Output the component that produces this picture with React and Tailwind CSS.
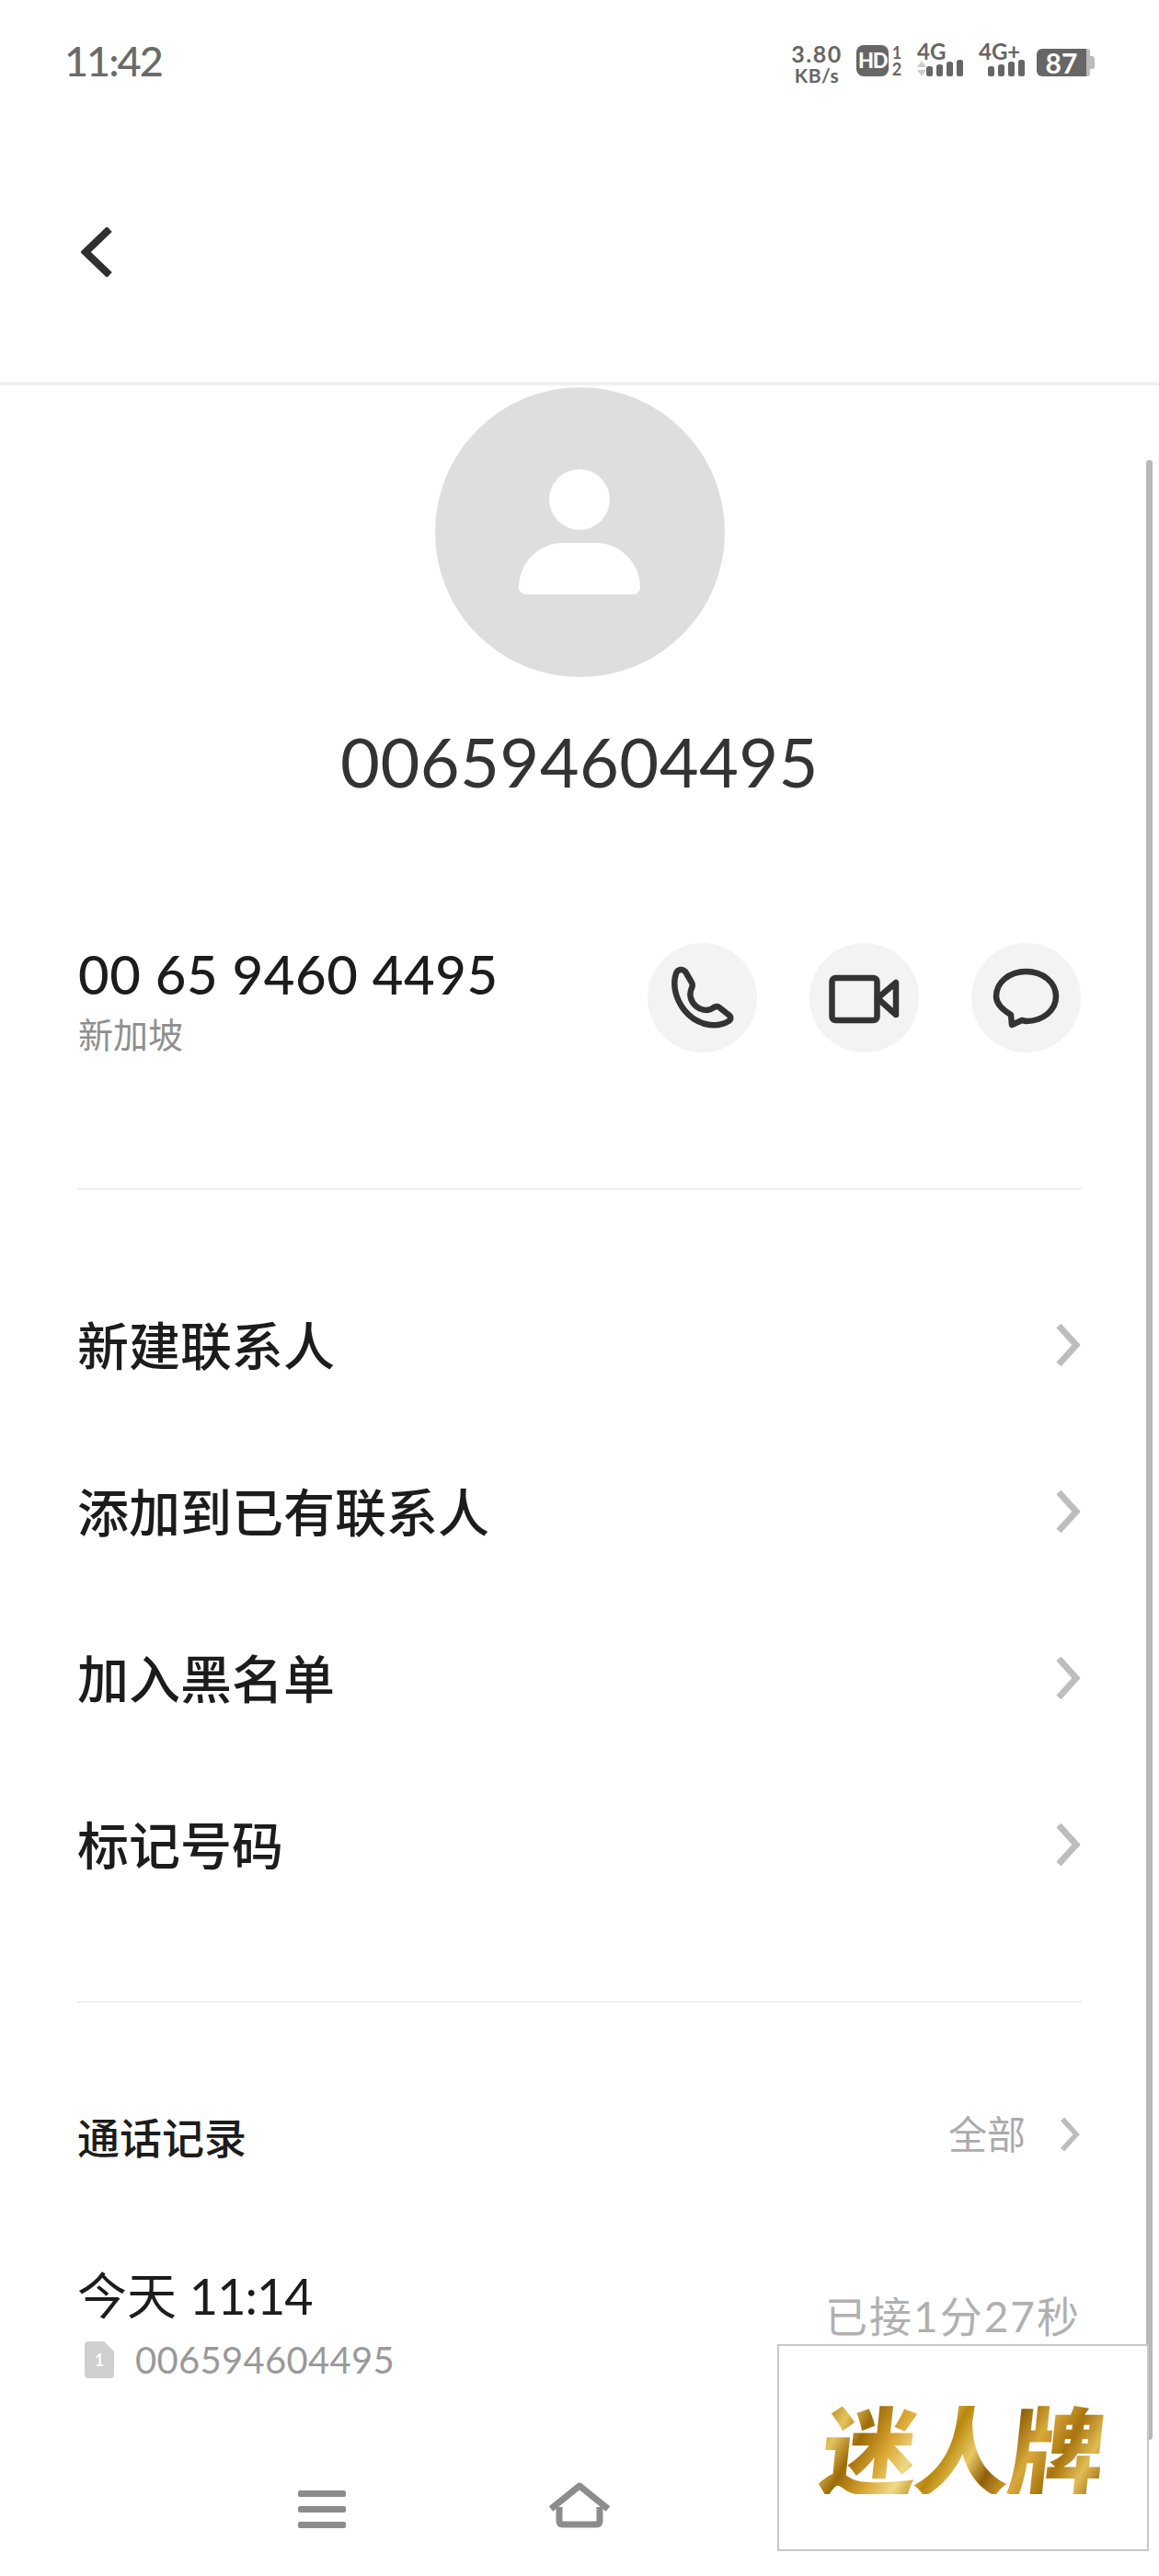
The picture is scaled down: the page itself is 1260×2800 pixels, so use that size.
const cjk = { fontFamily: 'Lato, "Noto Sans CJK SC", sans-serif' }

const actions = ['新建联系人', '添加到已有联系人', '加入黑名单', '标记号码']

function Chevron({ className }) {
  return (
    <svg viewBox="0 0 28 48" className={className} fill="none" stroke="currentColor" strokeWidth="7">
      <path d="M4 3l19 21L4 45" />
    </svg>
  )
}

function Bars() {
  return (
    <svg width="40" height="18" viewBox="0 0 40 18" fill="#666" className="block">
      <rect x="0" y="7" width="7" height="11" rx="2.5" />
      <rect x="11" y="5" width="7" height="13" rx="2.5" />
      <rect x="22" y="2" width="7" height="16" rx="2.5" />
      <rect x="33" y="0" width="7" height="18" rx="2.5" />
    </svg>
  )
}

function StatusIcons() {
  return (
    <div className="flex items-start text-[#666] font-bold">
      <div className="w-[54px] -mt-[1px] flex flex-col items-center leading-none">
        <span className="text-[25px] h-[25px] font-bold tracking-[1.5px]">3.80</span>
        <span className="text-[21px] h-[21px] font-bold tracking-[0.5px]">KB/s</span>
      </div>
      <div className="ml-[16px] mt-[2px] w-[35px] h-[34px] rounded-[8px] bg-[#666] text-white text-[22px] font-black tracking-[-1.5px] flex items-center justify-center leading-none">HD</div>
      <div className="ml-[2px] w-[14px] flex flex-col items-center text-[18px] leading-[18px] mt-[1px]">
        <span>1</span>
        <span>2</span>
      </div>
      <div className="ml-[15px] w-[50px] h-[36px] relative">
        <span className="block text-[24px] leading-[18px]">4G</span>
        <span className="block ml-[10px]"><Bars /></span>
        <span className="absolute left-0 top-[19px] w-0 h-0 border-x-[5px] border-x-transparent border-b-[7px] border-b-[#ccc]" />
        <span className="absolute left-0 top-[29px] w-0 h-0 border-x-[5px] border-x-transparent border-t-[7px] border-t-[#ccc]" />
      </div>
      <div className="ml-[17px] w-[51px] h-[36px] relative">
        <span className="block text-[24px] leading-[18px]">4G+</span>
        <span className="block ml-[10px]"><Bars /></span>
      </div>
      <div className="ml-[12px] mt-[6px] flex items-center">
        <div className="relative w-[54px] h-[30px] rounded-l-[6px] bg-[#666] text-white text-[30px] font-bold flex items-center justify-center leading-none">87</div>
        <div className="w-[4px] h-[30px] bg-[#bbb] rounded-r-[3px]" />
        <div className="w-[5px] h-[14px] bg-[#bbb] rounded-r-[3px]" />
      </div>
    </div>
  )
}

function RoundButton({ children }) {
  return (
    <button className="w-[119px] h-[119px] rounded-full bg-[#f3f3f3] flex items-center justify-center">
      <svg width="119" height="119" viewBox="0 0 119 119" fill="none" stroke="#333" strokeWidth="6.5" strokeLinejoin="round">
        {children}
      </svg>
    </button>
  )
}

export default function App() {
  return (
    <div className="relative w-[1260px] h-[2800px] overflow-hidden bg-white" style={cjk}>

      {/* Status bar */}
      <div className="h-[133px] pl-[70px] pr-[70px] pt-[47px] flex items-start justify-between">
        <span className="text-[45px] leading-[38px] text-[#6a6a6a] font-medium tracking-[-2px]">11:42</span>
        <StatusIcons />
      </div>

      {/* Header */}
      <div className="h-[282px] pl-[88px] pt-[114px]">
        <svg width="34" height="54" viewBox="0 0 34 54" fill="none" stroke="#2f2f2f" strokeWidth="8">
          <path d="M31 2L5 27l26 25" />
        </svg>
      </div>
      <div className="h-[4px] bg-[#f1f1f1]" />

      {/* Avatar + name */}
      <div className="flex flex-col items-center pt-[2px]">
        <div className="w-[315px] h-[315px] rounded-full bg-[#dedede] flex flex-col items-center pt-[89px]">
          <div className="w-[66px] h-[66px] rounded-full bg-white" />
          <div className="w-[132px] h-[56px] mt-[14px] bg-white rounded-t-[66px] rounded-b-[10px]" />
        </div>
        <h1 className="mt-[47px] text-[74px] leading-[90px] text-[#333] font-normal tracking-[0.4px]">006594604495</h1>
      </div>

      {/* Number + actions */}
      <div className="mt-[152px] h-[119px] pl-[85px] pr-[85px] flex items-center justify-between">
        <div className="pt-[5px]">
          <p className="text-[58px] leading-[62px] text-[#1c1c1c] tracking-[0.6px] font-medium">00 65 9460 4495</p>
          <p className="text-[38px] leading-[46px] text-[#8f8f8f] mt-[11px]">新加坡</p>
        </div>
        <div className="flex gap-[57px]">
          <RoundButton>
            <path d="M41 31c-3-3-8-3-10 2-4 12-1 27 9 40 12 15 33 21 48 12 3-2 3-5 0-7l-10-8c-2-2-4-1-6 0-5 4-13 4-19-1-7-6-8-14-5-20 1-2 1-4 0-6z" />
          </RoundButton>
          <RoundButton>
            <rect x="24.5" y="38" width="49" height="46" rx="4" />
            <path d="M74 60l20-17v35z" />
          </RoundButton>
          <RoundButton>
            <path d="M43 78C33 72 27 66 27 58c0-15 14-27 32.500-27S92 43 92 58 78 85 59.500 85L55 84l-11 5z" />
          </RoundButton>
        </div>
      </div>

      <div className="mx-[84px] mt-[147px] h-[2px] bg-[#f0f0f0]" />

      {/* Action rows */}
      <div className="mt-[79px] pl-[84px] pr-[85px]">
        {actions.map(label => (
          <div key={label} className="h-[181px] flex items-center justify-between">
            <span className="text-[56px] text-[#1c1c1c] font-medium">{label}</span>
            <Chevron className="w-[28px] h-[48px] -mt-[2px] text-[#bdbdbd]" />
          </div>
        ))}
      </div>

      <div className="mx-[84px] mt-[79px] h-[2px] bg-[#f0f0f0]" />

      {/* Call log */}
      <div className="mt-[117px] pl-[84px] pr-[85px] flex items-center justify-between">
        <span className="text-[46px] leading-[60px] text-[#1c1c1c] font-medium">通话记录</span>
        <div className="flex items-center gap-[36px] -mt-[8px]">
          <span className="text-[42px] leading-[56px] text-[#ababab]">全部</span>
          <Chevron className="w-[24px] h-[38px] text-[#bdbdbd]" />
        </div>
      </div>

      <div className="mt-[107px] pl-[84px] pr-[85px] flex items-start justify-between">
        <div>
          <p className="text-[54px] leading-[70px] text-[#1c1c1c]">今天 <span className="tracking-[-1px]">11:14</span></p>
          <div className="flex items-center mt-[9px]">
            <svg width="32" height="40" viewBox="0 0 32 40" className="ml-[8px]">
              <path d="M4 0h17l11 11v25a4 4 0 0 1-4 4H4a4 4 0 0 1-4-4V4a4 4 0 0 1 4-4z" fill="#cfcfcf" />
              <text x="16" y="27" textAnchor="middle" fontSize="18" fontWeight="700" fill="#fff">1</text>
            </svg>
            <span className="ml-[23px] text-[40px] leading-[50px] text-[#999] tracking-[0.3px]">006594604495</span>
          </div>
        </div>
        <span className="text-[46px] leading-[60px] text-[#b0b0b0] mt-[27px] tracking-[2px]">已接1分27秒</span>
      </div>

      {/* Nav bar */}
      <div className="absolute left-0 top-[2698px] w-full h-[50px] flex items-end pl-[324px]">
        <div className="w-[52px] flex flex-col gap-[10px]">
          <div className="h-[7px] bg-[#8c8c8c] rounded-[2px]" />
          <div className="h-[7px] bg-[#8c8c8c] rounded-[2px]" />
          <div className="h-[7px] bg-[#8c8c8c] rounded-[2px]" />
        </div>
        <svg width="68" height="50" viewBox="0 0 68 50" fill="none" stroke="#8c8c8c" strokeWidth="7" className="ml-[220px]">
          <path d="M3 29L34 4l31 25" strokeLinejoin="round" />
          <path d="M12 27v15q0 4 4 4h36q4 0 4-4V27" />
        </svg>
      </div>

      {/* Scrollbar */}
      <div className="absolute left-[1246px] top-[500px] w-[7px] h-[2152px] bg-[#b8b8b8] rounded-full" />

      {/* Watermark */}
      <div className="absolute left-[845px] top-[2548px] w-[404px] h-[225px] bg-white border-2 border-[#c8c8c8] flex items-center justify-center">
        <span
          className="inline-block text-[104px] leading-none font-black -skew-x-6 -mt-[4px] text-transparent bg-clip-text bg-[linear-gradient(115deg,#b07a10_0%,#e6c35c_9%,#9c6a08_17%,#d9a531_27%,#f0d98a_36%,#b8860b_45%,#e8c964_54%,#8f5f07_62%,#d8a93a_72%,#a8740d_82%,#e2bc55_91%,#96650a_100%)] tracking-[-2px]"
          style={{ fontFamily: '"Noto Sans CJK SC", sans-serif' }}
        >
          迷人牌
        </span>
      </div>
    </div>
  )
}
